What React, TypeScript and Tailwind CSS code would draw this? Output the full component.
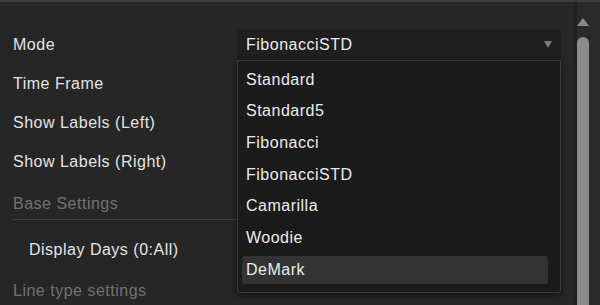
import React from 'react'

const options = ['Standard', 'Standard5', 'Fibonacci', 'FibonacciSTD', 'Camarilla', 'Woodie', 'DeMark']

function Row({ label, children }: { label: string; children?: React.ReactNode }) {
  return (
    <div className="flex h-[39px] items-center">
      <span className="w-[224px] text-[#e4e4e4]">{label}</span>
      {children}
    </div>
  )
}

export default function App() {
  const selected = 'DeMark'
  return (
    <div
      className="relative flex h-[305px] w-[600px] overflow-hidden border-t-2 border-[#3d3d3d] bg-[#262626] text-[16px] tracking-[0.5px]"
      style={{ fontFamily: '"Liberation Sans", Arial, sans-serif' }}
    >
      <div className="flex-1 pl-[13px] pt-[23px]">
        <Row label="Mode">
          <div className="flex h-[32px] w-[324px] items-center justify-between rounded-t-[3px] bg-[#1f1f1f] pl-[9px] pr-[9px] text-[#ececec]">
            <span>FibonacciSTD</span>
            <svg width="8" height="7" viewBox="0 0 8 7">
              <path d="M0 0 H8 L4 7 Z" fill="#7d7d7d" />
            </svg>
          </div>
        </Row>
        <Row label="Time Frame" />
        <Row label="Show Labels (Left)" />
        <Row label="Show Labels (Right)" />

        <div className="mr-[337px] flex h-[39px] items-center border-b border-[#3e3e3e] pt-[8px] text-[#727272]">
          Base Settings
        </div>
        <div className="flex h-[56px] items-center pl-[16px] pt-[3px] text-[#e4e4e4]">Display Days (0:All)</div>
        <div className="flex h-[30px] items-center text-[#727272]">Line type settings</div>
      </div>

      <div className="flex w-[26px] flex-col border-l-[3px] border-[#202020] bg-[#2a2a2a] pt-[16px]">
        <div className="flex w-[12px] justify-center">
          <svg width="12" height="8" viewBox="0 0 12 8">
            <path d="M6 0 L12 8 H0 Z" fill="#8a8a8a" />
          </svg>
        </div>
        <div className="mt-[11px] w-[12px] flex-1 rounded-t-full bg-[#8b8b8b]" />
      </div>

      <div className="absolute left-[237px] top-[58px] w-[324px] rounded-b-[3px] border border-[#3b3b3b] bg-[#1b1b1b] px-[4px] pb-[6px] pt-[3px] shadow-[0_2px_6px_rgba(0,0,0,0.6)]">
        <div className="pr-[8px]">
          {options.map(o => (
            <div key={o} className="flex h-[31.67px] items-center py-[2px]">
              <div
                className={`flex h-full w-full items-center rounded-[3px] pl-[4px] text-[#ececec] ${
                  o === selected ? 'bg-[#333333]' : ''
                }`}
              >
                {o}
              </div>
            </div>
          ))}
        </div>
      </div>
    </div>
  )
}
